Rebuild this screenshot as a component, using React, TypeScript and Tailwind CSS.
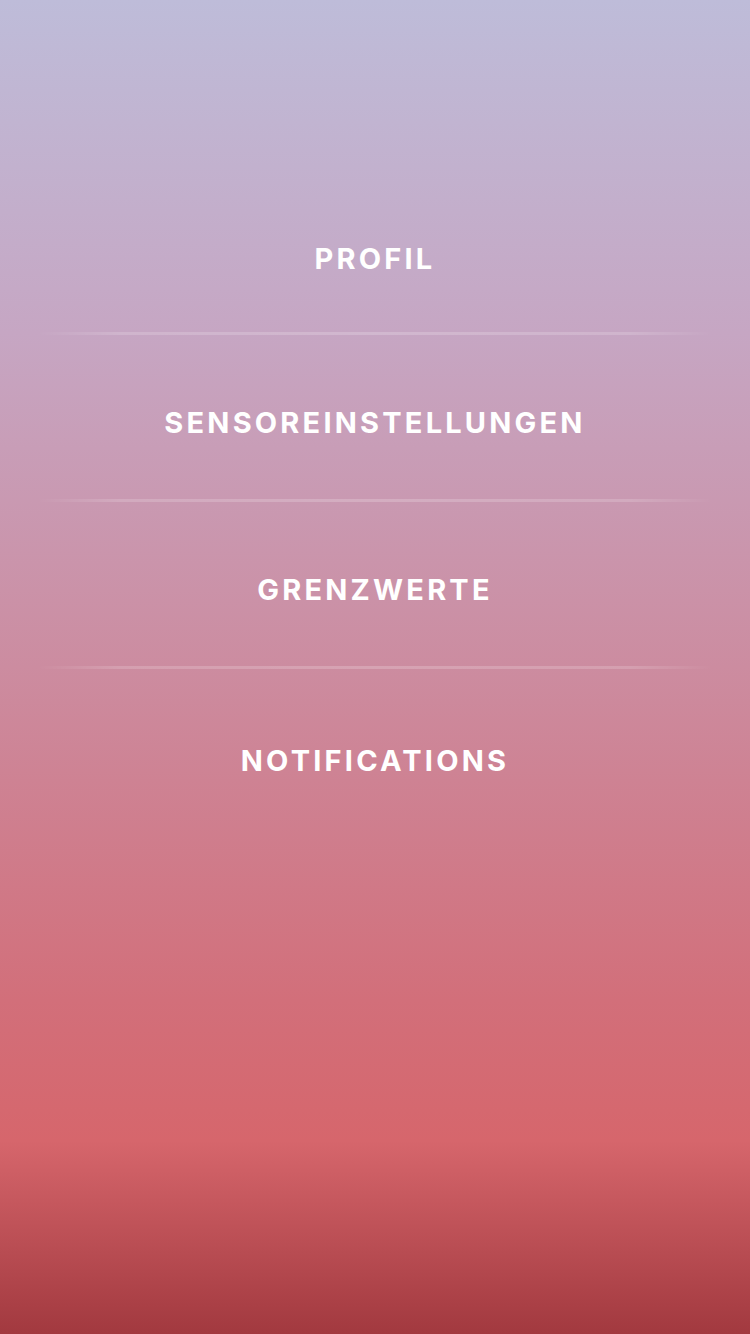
import React from "react";

const ITEMS = ["PROFIL", "SENSOREINSTELLUNGEN", "GRENZWERTE", "NOTIFICATIONS"];

const App = () => {
  return (
    <div className="w-[750px] h-[1334px] overflow-hidden bg-[linear-gradient(180deg,#bebcd9_0%,#c6a6c3_25%,#cc8ca0_50%,#d26f7a_75%,#d6666c_85.5%,#a2393f_100%)] font-['Inter','Liberation_Sans',sans-serif]">
      <nav className="flex flex-col pt-[171px]">
        {ITEMS.map((item, index) => {
          const last = index === ITEMS.length - 1;
          return (
            <div key={item} className="flex flex-col">
              <div
                className={
                  last
                    ? "pt-[72px]"
                    : index === 0
                    ? "h-[161px] pt-[68px]"
                    : "h-[164px] pt-[68px]"
                }
              >
                <h2 className="text-center text-white font-bold text-[29px] leading-[40px] tracking-[3.2px]">
                  {item}
                </h2>
              </div>
              {!last && (
                <div className="h-[3px] w-full bg-[linear-gradient(90deg,rgba(255,255,255,0)_5%,rgba(255,255,255,0.17)_16%,rgba(255,255,255,0.2)_50%,rgba(255,255,255,0.17)_84%,rgba(255,255,255,0)_95%)]" />
              )}
            </div>
          );
        })}
      </nav>
    </div>
  );
};

export default App;
